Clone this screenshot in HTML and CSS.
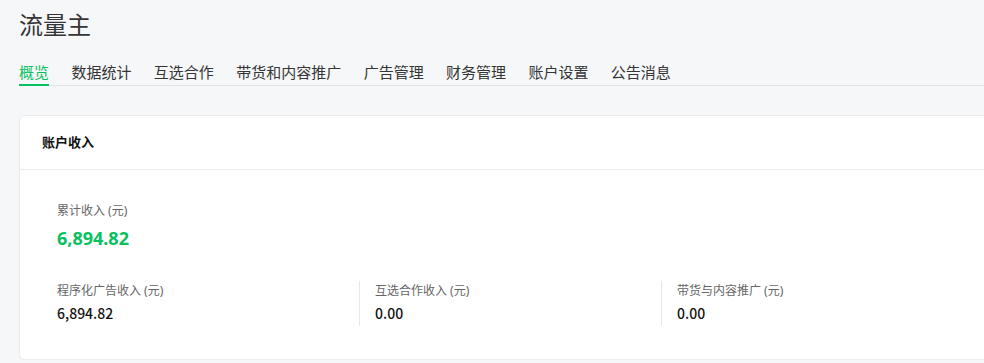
FILE: index.html
```html
<!DOCTYPE html>
<html lang="zh-CN">
<head>
  <meta charset="UTF-8" />
  <meta name="viewport" content="width=device-width, initial-scale=1" />
  <title>流量主</title>
  <link rel="stylesheet" href="styles.css">
</head>
<body>
  <div class="page">
    <h1 class="page-title">流量主</h1>

    <!-- Tabs -->
    <nav class="tabs">
      <a class="tab active" href="#">概览</a>
      <a class="tab" href="#">数据统计</a>
      <a class="tab" href="#">互选合作</a>
      <a class="tab" href="#">带货和内容推广</a>
      <a class="tab" href="#">广告管理</a>
      <a class="tab" href="#">财务管理</a>
      <a class="tab" href="#">账户设置</a>
      <a class="tab" href="#">公告消息</a>
    </nav>

    <!-- Account income -->
    <div class="card">
      <div class="card-header">账户收入</div>
      <div class="card-body">
        <div class="total">
          <div class="label">累计收入 (元)</div>
          <div class="total-value">6,894.82</div>
        </div>
        <div class="income-row">
          <div class="income-item">
            <div class="label">程序化广告收入 (元)</div>
            <div class="value">6,894.82</div>
          </div>
          <div class="income-item">
            <div class="label">互选合作收入 (元)</div>
            <div class="value">0.00</div>
          </div>
          <div class="income-item">
            <div class="label">带货与内容推广 (元)</div>
            <div class="value">0.00</div>
          </div>
        </div>
      </div>
    </div>
  </div>
</body>
</html>
```

FILE: styles.css
```css
body {
  margin: 0;
  background: #f6f7f9;
  font-family: "Noto Sans", "Noto Sans CJK SC", sans-serif;
  color: #333;
  overflow: hidden;
}
.page {
  width: 1010px;
  padding: 9px 0 0 19px;
}
.page-title {
  margin: 0 0 20px;
  font-size: 24px;
  line-height: 32px;
  font-weight: normal;
  color: #353535;
}
.tabs {
  display: flex;
  gap: 22.4px;
  border-bottom: 1px solid #e2e3e5;
}
.tab {
  font-size: 15px;
  line-height: 22px;
  padding-bottom: 1px;
  border-bottom: 2px solid transparent;
  margin-bottom: -1px;
  color: #353535;
  text-decoration: none;
}
.tab.active {
  color: #07c160;
  border-bottom-color: #07c160;
}
.card {
  margin-top: 29px;
  background: #fff;
  border: 1px solid #ebecee;
  border-radius: 6px;
  box-shadow: 0 1px 2px rgba(0,0,0,0.04);
}
.card-header {
  height: 53px;
  line-height: 53px;
  padding-left: 22px;
  font-size: 13px;
  font-weight: bold;
  color: #111;
  border-bottom: 1px solid #ebecee;
}
.card-body {
  padding: 32px 0 33px 37px;
}
.label {
  font-size: 12px;
  line-height: 18px;
  color: #666;
}
.total-value {
  margin-top: 5px;
  font-size: 18px;
  line-height: 26px;
  font-weight: bold;
  color: #07c160;
}
.income-row {
  display: flex;
  margin-top: 30px;
}
.income-item {
  width: 302px;
  padding: 1px 0 2px;
}
.income-item + .income-item {
  border-left: 1px solid #e7e8ea;
  padding-left: 15px;
  width: 286px;
}
.income-item .label {
  margin-bottom: 2px;
}
.value {
  font-family: "Noto Sans CJK SC", "Noto Sans", sans-serif;
  font-size: 14px;
  line-height: 22px;
  font-weight: 500;
  color: #111;
}
```
